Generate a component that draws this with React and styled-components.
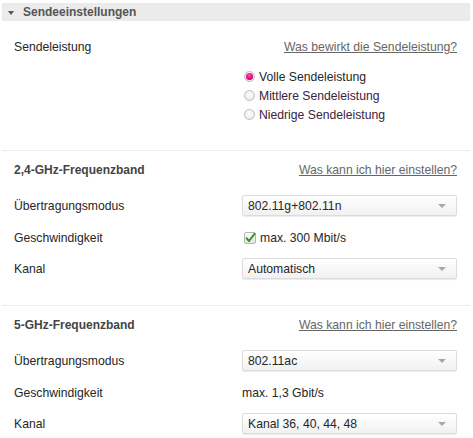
import React from "react";
import styled, { createGlobalStyle } from "styled-components";

const GlobalStyle = createGlobalStyle`
  body {
    margin: 0;
    background: #fff;
    font-family: "Liberation Sans", Arial, sans-serif;
    font-size: 12.2px;
    color: #262626;
  }
`;

const Page = styled.div`
  width: 468px;
  margin-left: 2px;
  padding-top: 3px;
`;

const Header = styled.div`
  height: 18px;
  background: #ebebeb;
  display: flex;
  align-items: center;
  padding-left: 6px;
  gap: 9px;
  font-weight: bold;
  font-size: 12px;
  color: #555;
`;

const Caret = styled.span`
  width: 0;
  height: 0;
  border-left: 3.5px solid transparent;
  border-right: 3.5px solid transparent;
  border-top: 4px solid #555;
  margin-top: 2px;
`;

const Section = styled.section`
  padding: ${(p) => p.$top}px 13px ${(p) => (p.$last ? 4 : 26)}px 12px;
  border-bottom: ${(p) => (p.$last ? "none" : "1px solid #ececec")};
`;

const Row = styled.div`
  display: flex;
  align-items: center;
  height: ${(p) => p.$h || 20}px;
  margin-top: ${(p) => p.$mt || 0}px;
`;

const Label = styled.div`
  width: 228px;
  flex: none;
  font-weight: ${(p) => (p.$bold ? "bold" : "normal")};
  font-size: ${(p) => (p.$bold ? "12px" : "inherit")};
  color: ${(p) => (p.$bold ? "#444" : "#262626")};
`;

const Field = styled.div`
  flex: 1;
  display: flex;
  align-items: center;
  justify-content: ${(p) => (p.$right ? "flex-end" : "flex-start")};
`;

const HelpLink = styled.a`
  color: #666;
  text-decoration: underline;
  cursor: pointer;
`;

const RadioList = styled.div`
  margin-top: 10px;
  margin-left: 228px;
`;

const RadioRow = styled.label`
  display: flex;
  align-items: center;
  height: 19px;
  gap: 4px;
  padding-left: 2px;
`;

const RadioDot = styled.span`
  width: 11px;
  height: 11px;
  border-radius: 50%;
  border: 1px solid #bdbdbd;
  background: radial-gradient(circle at 50% 40%, #fff 0%, #ececec 70%, #d8d8d8 100%);
  display: flex;
  align-items: center;
  justify-content: center;
  box-sizing: border-box;
  &::after {
    content: "";
    display: ${(p) => (p.$on ? "block" : "none")};
    width: 7px;
    height: 7px;
    border-radius: 50%;
    background: radial-gradient(circle at 45% 35%, #ff4fa8 0%, #e20074 60%, #b0005a 100%);
  }
`;

const RadioText = styled.span`
  color: ${(p) => (p.$on ? "#262626" : "#3a2440")};
`;

const Select = styled.div`
  width: 215px;
  height: 21px;
  box-sizing: border-box;
  border: 1px solid #dcdcdc;
  border-radius: 2px;
  background: linear-gradient(#ffffff, #f1f1f1);
  box-shadow: 0 1px 1px rgba(0, 0, 0, 0.08);
  display: flex;
  align-items: center;
  justify-content: space-between;
  padding: 0 10px 0 5px;
  color: #262626;
`;

const Arrow = styled.span`
  width: 0;
  height: 0;
  border-left: 4px solid transparent;
  border-right: 4px solid transparent;
  border-top: 4px solid #a8a8a8;
`;

const Check = styled.label`
  display: flex;
  align-items: center;
  gap: 4px;
  padding-left: 2px;
`;

const CheckIcon = () => (
  <svg width="12" height="12" viewBox="0 0 12 12">
    <defs>
      <linearGradient id="cb" x1="0" y1="0" x2="0" y2="1">
        <stop offset="0" stopColor="#ffffff" />
        <stop offset="1" stopColor="#e3e3e3" />
      </linearGradient>
    </defs>
    <rect x="0.5" y="0.5" width="11" height="11" rx="1.5" fill="url(#cb)" stroke="#b5b5b5" />
    <path d="M2.5 6.2 L5 9 L10.5 1.8" fill="none" stroke="#2f9a1c" strokeWidth="2" strokeLinecap="round" strokeLinejoin="round" />
  </svg>
);

const Dropdown = ({ value }) => (
  <Select>
    <span>{value}</span>
    <Arrow />
  </Select>
);

const Band = ({ title, mode, speed, checked, channel, last }) => (
  <Section $top={9} $last={last}>
    <Row>
      <Label $bold>{title}</Label>
      <Field $right>
        <HelpLink>Was kann ich hier einstellen?</HelpLink>
      </Field>
    </Row>
    <Row $h={21} $mt={15}>
      <Label>Übertragungsmodus</Label>
      <Field>
        <Dropdown value={mode} />
      </Field>
    </Row>
    <Row $mt={12}>
      <Label>Geschwindigkeit</Label>
      <Field>
        {checked ? (
          <Check>
            <CheckIcon />
            <span>{speed}</span>
          </Check>
        ) : (
          <span>{speed}</span>
        )}
      </Field>
    </Row>
    <Row $h={21} $mt={10}>
      <Label>Kanal</Label>
      <Field>
        <Dropdown value={channel} />
      </Field>
    </Row>
  </Section>
);

const levels = ["Volle Sendeleistung", "Mittlere Sendeleistung", "Niedrige Sendeleistung"];

export default function App() {
  return (
    <>
      <GlobalStyle />
      <Page>
        <Header>
          <Caret />
          <span>Sendeeinstellungen</span>
        </Header>
        <Section $top={16}>
          <Row>
            <Label>Sendeleistung</Label>
            <Field $right>
              <HelpLink>Was bewirkt die Sendeleistung?</HelpLink>
            </Field>
          </Row>
          <RadioList>
            {levels.map((l, i) => (
              <RadioRow key={l}>
                <RadioDot $on={i === 0} />
                <RadioText $on={i === 0}>{l}</RadioText>
              </RadioRow>
            ))}
          </RadioList>
        </Section>
        <Band
          title="2,4-GHz-Frequenzband"
          mode="802.11g+802.11n"
          speed="max. 300 Mbit/s"
          checked
          channel="Automatisch"
        />
        <Band
          title="5-GHz-Frequenzband"
          mode="802.11ac"
          speed="max. 1,3 Gbit/s"
          channel="Kanal 36, 40, 44, 48"
          last
        />
      </Page>
    </>
  );
}
